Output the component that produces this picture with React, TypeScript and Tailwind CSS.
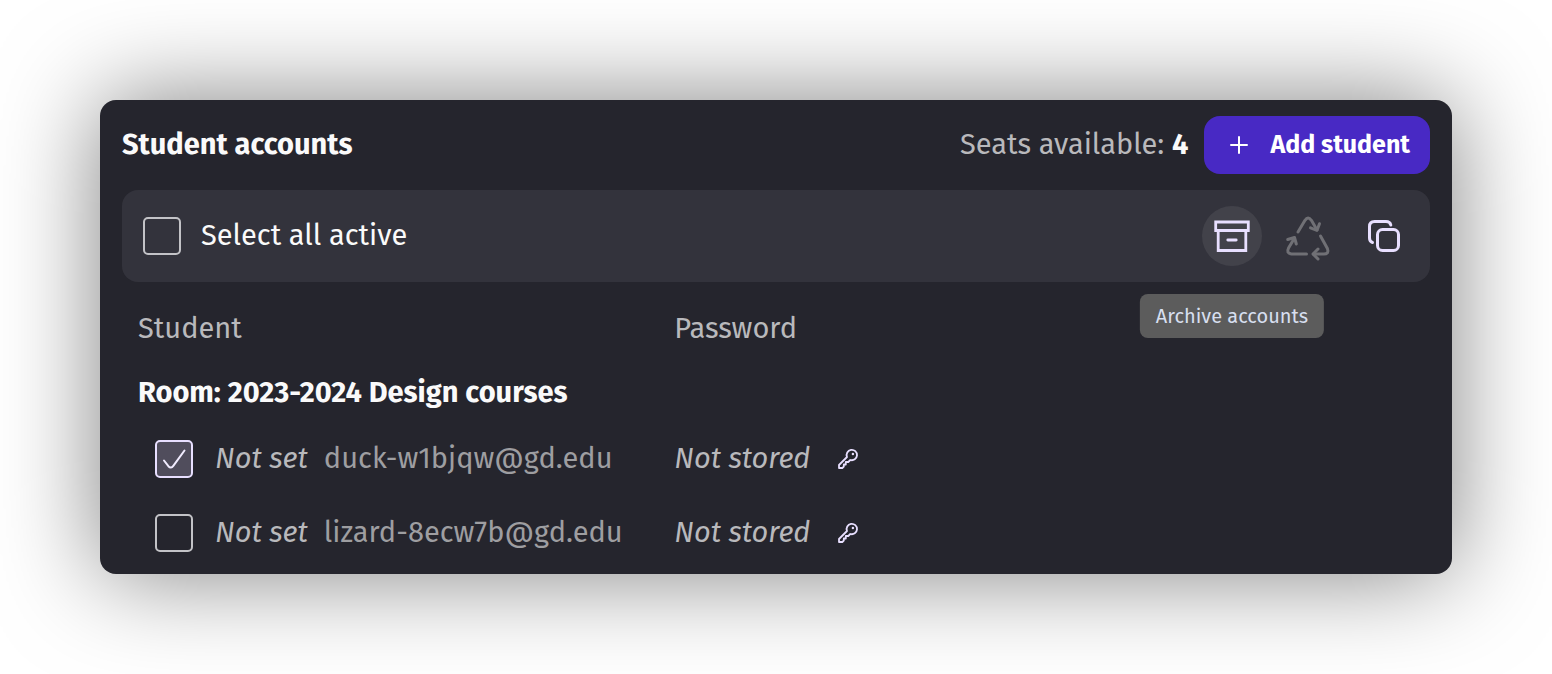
import { useState } from "react";
import type { ComponentProps } from "react";

type Student = { id: string; email: string; selected: boolean };

const initialStudents: Student[] = [
  { id: "duck", email: "duck-w1bjqw@gd.edu", selected: true },
  { id: "lizard", email: "lizard-8ecw7b@gd.edu", selected: false },
];

function Checkbox(props: ComponentProps<"input">) {
  return (
    <span className="relative flex size-[38px] shrink-0">
      <input
        type="checkbox"
        className="peer size-full cursor-pointer appearance-none rounded-[5px] border-2 border-[#c3c3c7] checked:border-[#e8dfff] checked:bg-[#504d5c]"
        {...props}
      />
      <svg
        viewBox="0 0 38 38"
        fill="none"
        stroke="#f1ecff"
        strokeWidth="2"
        strokeLinecap="round"
        strokeLinejoin="round"
        className="pointer-events-none absolute inset-0 hidden peer-checked:block"
        aria-hidden="true"
      >
        <path d="M9 20.500L13.400 26.200Q16 29 18.300 25.800L29.500 10.500" />
      </svg>
    </span>
  );
}

function ArchiveIcon() {
  return (
    <svg viewBox="0 0 40 40" className="size-10" fill="none" stroke="#e8dfff" strokeWidth="2.800" aria-hidden="true">
      <path d="M3.700 6h32.600v8.500h-32.600z" />
      <path d="M6.200 15v19.500h27.600V15" />
      <path d="M15.800 24h8.400" strokeLinecap="round" />
    </svg>
  );
}

function RecycleIcon() {
  return (
    <svg
      viewBox="0 0 44 44"
      className="size-11 overflow-visible"
      fill="none"
      stroke="#707075"
      strokeWidth="3"
      strokeLinecap="round"
      strokeLinejoin="round"
      aria-hidden="true"
    >
      <path d="M12 18L19 6.300Q22 1.800 25.400 6.300L31 16" />
      <path d="M24.500 13.800L31 16.300L33.500 9.700" />
      <path d="M34.500 22L41.400 34.500Q43.400 40 38 40H27.500" />
      <path d="M32 35L27 40L32 45" />
      <path d="M20.500 40H5.500Q-.2 39.500 2.700 33.700L8.500 24" />
      <path d="M1.700 25.500L8.500 23.500L10.300 30" />
    </svg>
  );
}

function CopyIcon() {
  return (
    <svg viewBox="0 0 40 40" className="size-10" fill="none" stroke="#e8dfff" strokeWidth="3" strokeLinecap="round" aria-hidden="true">
      <rect x="13.500" y="13.500" width="21" height="21" rx="5" />
      <path d="M8.500 26.500Q5.500 25.500 5.500 22V10.500Q5.500 5.500 10.500 5.500H22Q26 5.500 26.800 9" />
    </svg>
  );
}

function KeyIcon() {
  return (
    <svg viewBox="0 0 24 24" className="size-6" fill="none" stroke="#e8dfff" strokeWidth="1.800" strokeLinejoin="round" aria-hidden="true">
      <path d="M11 10A5.200 5.200 0 1 1 14.300 13L12.300 15H9.800V17.500H7.800V19.500L6.300 21H3V18Z" />
      <circle cx="16.900" cy="7" r="1.200" fill="#e8dfff" stroke="none" />
    </svg>
  );
}

const iconButton = "flex size-[60px] items-center justify-center rounded-full";

export default function App() {
  const [students, setStudents] = useState(initialStudents);
  const allSelected = students.every((s) => s.selected);

  const toggle = (id: string) =>
    setStudents((list) => list.map((s) => (s.id === id ? { ...s, selected: !s.selected } : s)));

  return (
    <main className="bg-white p-[100px] font-['Fira_Sans','Noto_Sans',sans-serif] text-[29px] leading-9 text-[#b9b9bc]">
      <section className="rounded-2xl bg-[#25252d] px-[22px] pt-4 pb-1 shadow-[0_0_100px_rgba(0,0,0,0.5)]">
        <header className="flex items-center justify-between">
          <h1 className="text-[29px] font-bold text-[#fafafa]">Student accounts</h1>
          <div className="flex items-center gap-4">
            <p>
              Seats available: <strong className="font-bold text-[#fafafa]">4</strong>
            </p>
            <button type="button" className="flex h-[58px] items-center gap-4 rounded-2xl bg-[#4829c4] px-5 text-[25px] font-bold text-white">
              <svg viewBox="0 0 30 30" className="size-[30px]" stroke="currentColor" strokeWidth="2" strokeLinecap="round" aria-hidden="true">
                <path d="M15 7v16M7 15h16" />
              </svg>
              Add student
            </button>
          </div>
        </header>

        <div className="mt-4 flex items-center justify-between rounded-2xl bg-[#33333c] py-4 pr-4 pl-[21px]">
          <label className="flex cursor-pointer items-center gap-5 text-[#fafafa]">
            <Checkbox
              checked={allSelected}
              onChange={(e) => {
                const selected = e.target.checked;
                setStudents((list) => list.map((s) => ({ ...s, selected })));
              }}
            />
            Select all active
          </label>
          <div className="flex items-center gap-4">
            <div className="relative flex">
              <button type="button" aria-label="Archive" aria-describedby="archive-tip" className={`${iconButton} bg-[#42424a]`}>
                <ArchiveIcon />
              </button>
              <span
                id="archive-tip"
                role="tooltip"
                className="absolute top-[88px] left-1/2 -translate-x-1/2 rounded-lg bg-[#5c5c5c] px-4 py-2 text-[20px] leading-7 whitespace-nowrap text-[#d7dfef]"
              >
                Archive accounts
              </span>
            </div>
            <button type="button" aria-label="Restore" disabled className={iconButton}>
              <RecycleIcon />
            </button>
            <button type="button" aria-label="Copy" className={iconButton}>
              <CopyIcon />
            </button>
          </div>
        </div>

        <table className="mt-3 w-full table-fixed text-left">
          <thead>
            <tr className="h-[70px]">
              <th scope="col" className="w-[41%] px-4 font-normal">Student</th>
              <th scope="col" className="px-4 font-normal">Password</th>
            </tr>
          </thead>
          <tbody>
            <tr className="h-[58px]">
              <th scope="rowgroup" colSpan={2} className="px-4 font-bold text-[#fafafa]">
                Room: 2023-2024 Design courses
              </th>
            </tr>
            {students.map((s) => (
              <tr key={s.id} className="h-[74px]">
                <td className="pl-[33px]">
                  <label className="flex cursor-pointer items-center whitespace-nowrap">
                    <Checkbox checked={s.selected} onChange={() => toggle(s.id)} />
                    <em className="ml-[22px]">Not set</em>
                    <span className="ml-4 text-[#9e9ea1]">{s.email}</span>
                  </label>
                </td>
                <td className="px-4">
                  <div className="flex items-center gap-[26px]">
                    <em>Not stored</em>
                    <button type="button" aria-label={`Set password for ${s.email}`}>
                      <KeyIcon />
                    </button>
                  </div>
                </td>
              </tr>
            ))}
          </tbody>
        </table>
      </section>
    </main>
  );
}
